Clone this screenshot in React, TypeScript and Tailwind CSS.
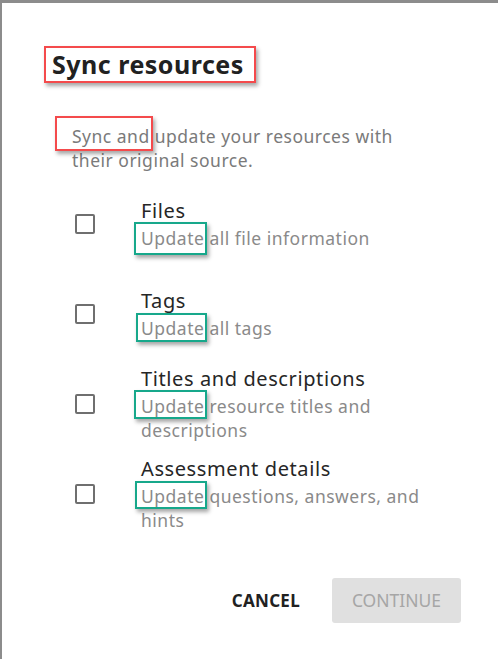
import { Fragment } from 'react'

type Option = {
  title: string
  rest: string
  box: string
}

const options: Option[] = [
  { title: 'Files', rest: ' all file information', box: '-left-[7px] -right-[3px] -top-[4px] -bottom-[5px]' },
  { title: 'Tags', rest: ' all tags', box: '-left-[5px] -right-[3px] -top-[3px] -bottom-[2px]' },
  {
    title: 'Titles and descriptions',
    rest: ' resource titles and descriptions',
    box: '-left-[7px] -right-[3px] -top-[4px] -bottom-[1px]',
  },
  {
    title: 'Assessment details',
    rest: ' questions, answers, and hints',
    box: '-left-[6px] -right-[3px] -top-[3px] -bottom-[1px]',
  },
]

const shadow = 'shadow-[2px_3px_4px_rgba(0,0,0,0.35)]'

function Checkbox() {
  return <div className="h-[20px] w-[20px] shrink-0 rounded-[2px] border-2 border-[#6f6f6f]" />
}

export default function App() {
  return (
    <div
      className="h-[659px] w-[498px] overflow-hidden border-l-2 border-t-[3px] border-[#8c8c8c] bg-white"
      style={{ fontFamily: '"Noto Sans", "Open Sans", sans-serif' }}
    >
      <div className="flex flex-col pl-[50px] pr-[37px] pt-[45px]">
        <h1 className="m-0 text-[25px] font-bold leading-[32px] tracking-[0.5px] text-[#212121]">
          <span className="relative">
            Sync resources
            <span
              className={`pointer-events-none absolute -bottom-[2px] -left-[8px] -right-[12px] -top-[1px] border-2 border-[#f44a4c] ${shadow}`}
            />
          </span>
        </h1>

        <p className="m-0 mt-[44px] w-[370px] pl-[20px] text-[17.5px] leading-[24px] tracking-[0.5px] text-[#7a7a7a]">
          <span className="relative">
            Sync and
            <span
              className={`pointer-events-none absolute -bottom-[3px] -left-[17px] -right-[3px] -top-[8px] border-2 border-[#f44a4c] ${shadow}`}
            />
          </span>{' '}
          update your resources with their original source.
        </p>

        <ul className="m-0 mt-[7px] list-none p-0">
          {options.map((opt) => (
            <li key={opt.title} className="flex h-[90px] items-center">
              <div className="flex w-[91px] justify-start pl-[23px]">
                <Checkbox />
              </div>
              <div className="-ml-[2px] flex w-[300px] flex-col">
                <span className="-mt-[1px] mb-[1px] text-[20px] leading-[28px] tracking-[0.6px] text-[#262626]">
                  {opt.title}
                </span>
                <span className="text-[17.5px] leading-[24px] tracking-[0.5px] text-[#8a8a8a]">
                  <span className="relative">
                    Update
                    <span
                      className={`pointer-events-none absolute border-2 border-[#17a88b] ${opt.box} ${shadow}`}
                    />
                  </span>
                  <Fragment>{opt.rest}</Fragment>
                </span>
              </div>
            </li>
          ))}
        </ul>

        <div className="mt-[39px] flex items-center justify-end gap-[16px]">
          <button className="h-[45px] px-[16px] text-[17px] font-bold uppercase tracking-[0.3px] text-[#212121]">
            Cancel
          </button>
          <button
            disabled
            className="h-[45px] w-[129px] rounded-[3px] bg-[#e0e0e0] text-[17.5px] uppercase text-[#a6a6a6]"
          >
            Continue
          </button>
        </div>
      </div>
    </div>
  )
}
